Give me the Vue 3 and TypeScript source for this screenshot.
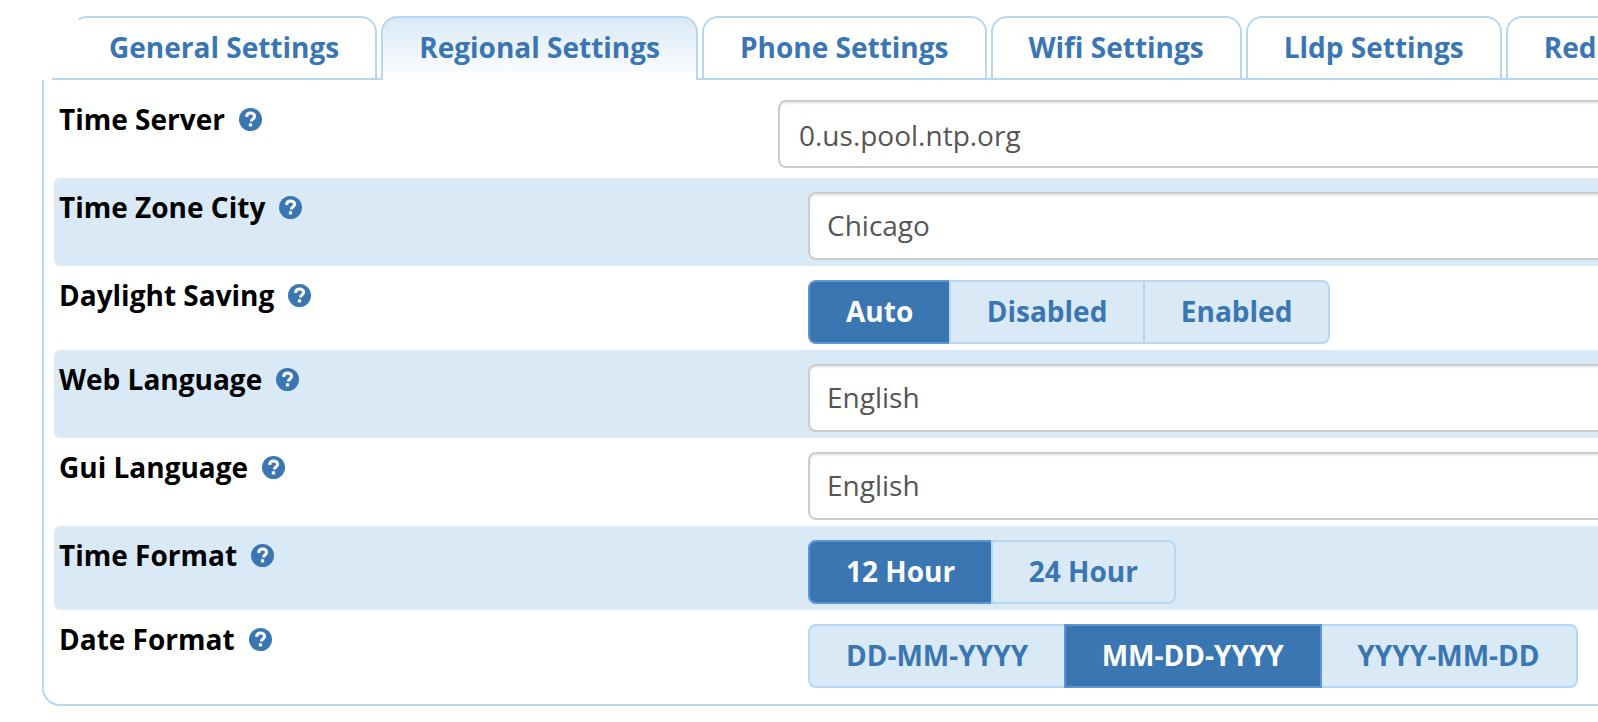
<script setup lang="ts">
interface Tab { label: string; active?: boolean }
type Row =
  | { label: string; kind: 'text'; value: string }
  | { label: string; kind: 'choice'; options: string[]; selected: string };

const tabs: Tab[] = [
  { label: 'General Settings' },
  { label: 'Regional Settings', active: true },
  { label: 'Phone Settings' },
  { label: 'Wifi Settings' },
  { label: 'Lldp Settings' },
  { label: 'Red' },
];

const firstRow = { label: 'Time Server', value: '0.us.pool.ntp.org' };

const rows: Row[] = [
  { label: 'Time Zone City', kind: 'text', value: 'Chicago' },
  { label: 'Daylight Saving', kind: 'choice', options: ['Auto', 'Disabled', 'Enabled'], selected: 'Auto' },
  { label: 'Web Language', kind: 'text', value: 'English' },
  { label: 'Gui Language', kind: 'text', value: 'English' },
  { label: 'Time Format', kind: 'choice', options: ['12 Hour', '24 Hour'], selected: '12 Hour' },
  { label: 'Date Format', kind: 'choice', options: ['DD-MM-YYYY', 'MM-DD-YYYY', 'YYYY-MM-DD'], selected: 'MM-DD-YYYY' },
];
</script>

<template>
  <div class="page">
    <div class="tabs">
      <div v-for="t in tabs" :key="t.label" class="tab" :class="{ active: t.active }">{{ t.label }}</div>
    </div>
    <div class="panel">
      <div class="first-row">
        <div class="label first-label">
          {{ firstRow.label }}
          <svg class="help" viewBox="0 0 24 24"><circle cx="12" cy="12" r="12" fill="#3a76b2" /><path d="M7.9 9.2c.2-2.5 2-3.9 4.2-3.9 2.4 0 4.2 1.4 4.2 3.4 0 1.6-.9 2.3-2 3.1-1 .7-1.3 1.1-1.3 2.4" fill="none" stroke="#fff" stroke-width="3.2" /><rect x="10.3" y="16" width="3.4" height="3.4" rx=".5" fill="#fff" /></svg>
        </div>
        <div class="input first-input">{{ firstRow.value }}</div>
      </div>
      <div v-for="(r, i) in rows" :key="r.label" class="row" :class="{ 'row-choice': r.kind === 'choice', striped: i % 2 === 0 }">
        <div class="label">
          {{ r.label }}
          <svg class="help" viewBox="0 0 24 24"><circle cx="12" cy="12" r="12" fill="#3a76b2" /><path d="M7.9 9.2c.2-2.5 2-3.9 4.2-3.9 2.4 0 4.2 1.4 4.2 3.4 0 1.6-.9 2.3-2 3.1-1 .7-1.3 1.1-1.3 2.4" fill="none" stroke="#fff" stroke-width="3.2" /><rect x="10.3" y="16" width="3.4" height="3.4" rx=".5" fill="#fff" /></svg>
        </div>
        <div v-if="r.kind === 'text'" class="input">{{ r.value }}</div>
        <div v-else class="options">
          <div v-for="o in r.options" :key="o" class="opt" :class="{ on: o === r.selected }">{{ o }}</div>
        </div>
      </div>
    </div>
  </div>
</template>

<style>
html, body { margin: 0; background: #fff; overflow: hidden; }
</style>

<style scoped>
.page {
  width: 1598px;
  height: 722px;
  overflow: hidden;
  box-sizing: border-box;
  padding: 16px 0 0 42px;
  font-family: "Open Sans", sans-serif;
}
.tabs {
  display: flex;
  gap: 4px;
  width: 1700px;
  height: 64px;
  margin-left: 10px;
  padding-left: 19px;
  box-sizing: border-box;
  border-bottom: 2px solid #b7d6f0;
}
.tab {
  flex: none;
  box-sizing: border-box;
  height: 64px;
  padding: 0 36px;
  border: 2px solid #b7d6f0;
  border-radius: 16px 16px 0 0;
  color: #3a76b2;
  font-weight: 700;
  font-size: 28px;
  line-height: 58px;
  white-space: nowrap;
  background: #fff;
}
.tab:first-child { clip-path: inset(0 0 0 8px); }
.tab:last-child { min-width: 300px; }
.tab.active {
  border-bottom: 0;
  background: linear-gradient(#d9e9f6, #fff);
}
.panel {
  width: 1700px;
  box-sizing: border-box;
  height: 626px;
  border: 2px solid #b7d6f0;
  border-top: 0;
  border-radius: 0 0 18px 18px;
  padding: 20px 10px 0;
}
.first-row {
  display: flex;
  align-items: flex-start;
  height: 78px;
}
.row {
  display: flex;
  align-items: flex-start;
  box-sizing: border-box;
  height: 88px;
  padding-top: 14px;
  border-radius: 6px;
}
.row-choice { height: 84px; }
.striped { background: #d9e9f6; }
.label {
  flex: none;
  box-sizing: border-box;
  width: 754px;
  padding-left: 5px;
  color: #000;
  font-weight: 700;
  font-size: 28px;
  line-height: 31px;
  white-space: nowrap;
  display: flex;
  align-items: center;
  gap: 14px;
}
.first-label { width: 724px; line-height: 39px; }
.help { width: 23px; height: 23px; flex: none; }
.input {
  flex: none;
  box-sizing: border-box;
  width: 900px;
  height: 68px;
  padding: 0 17px;
  line-height: 62px;
  font-size: 28px;
  color: #555;
  background: #fff;
  border: 2px solid #ccc;
  border-radius: 8px;
  box-shadow: inset 0 2px 2px rgba(0, 0, 0, 0.075);
}
.first-input { padding-left: 19px; line-height: 67px; }
.options { display: flex; }
.opt {
  flex: none;
  box-sizing: border-box;
  height: 64px;
  padding: 0 36px;
  line-height: 59px;
  font-size: 28px;
  font-weight: 700;
  color: #3a76b2;
  background: #d9e9f6;
  border: 2px solid #b7d6f0;
  margin-left: -2.5px;
  white-space: nowrap;
}
.opt:first-child { margin-left: 0; border-radius: 8px 0 0 8px; }
.opt:last-child { border-radius: 0 8px 8px 0; }
.opt.on { background: #3a76b2; color: #fff; border-color: #5b96d2; }
.opt.on:not(:first-child) { position: relative; }
</style>
